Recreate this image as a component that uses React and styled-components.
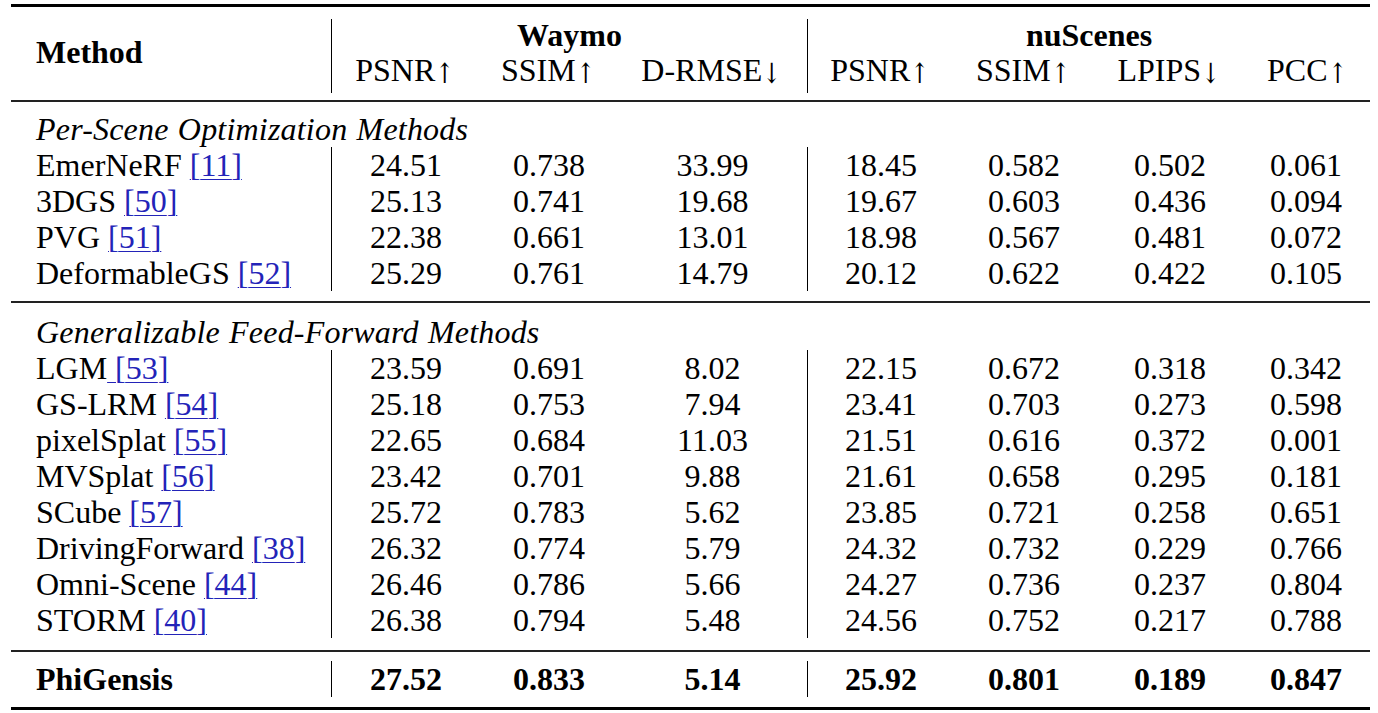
import React from 'react'
import styled, { createGlobalStyle } from 'styled-components'

const GlobalStyle = createGlobalStyle`
  html, body {
    margin: 0;
    padding: 0;
    background: #fff;
  }
`

const Table = styled.table`
  border-collapse: separate;
  border-spacing: 0;
  table-layout: fixed;
  width: 1359px;
  margin: 4px 0 0 11px;
  font-family: 'Liberation Serif', 'Times New Roman', serif;
  font-size: 32px;
  color: #000;
`

const RuleCell = styled.td`
  height: ${p => (p.$thick ? 3 : 2)}px;
  padding: 0;
  background: ${p => (p.$thick ? '#000' : '#222')};
  font-size: 0;
  line-height: 0;
`

const GapCell = styled.td`
  height: ${p => p.$h}px;
  padding: 0;
  font-size: 0;
  line-height: 0;
`

const HeadCell = styled.th`
  box-sizing: border-box;
  height: ${p => (p.$span ? 72 : 36)}px;
  padding: 0 0 ${p => p.$pb || 0}px ${p => (p.$left ? 25 : 0)}px;
  line-height: 30px;
  vertical-align: middle;
  text-align: ${p => (p.$left ? 'left' : 'center')};
  font-weight: ${p => (p.$bold ? 700 : 400)};
  white-space: nowrap;
  border-right: ${p => (p.$divider ? '1px solid #000' : 'none')};
`

const Arrow = styled.span`
  font-family: 'DejaVu Serif', serif;
  font-size: 28px;
  display: inline-block;
  transform: scaleX(0.8) translateY(2px);
  margin-left: -2px;
`

const Section = styled.td`
  height: 36px;
  padding: 0 0 0 25px;
  line-height: 36px;
  font-style: italic;
  white-space: nowrap;
  word-spacing: 1px;
  letter-spacing: 0.2px;
`

const NameCell = styled.td`
  height: 36px;
  padding: 0 0 0 25px;
  line-height: 36px;
  white-space: nowrap;
  border-right: 1px solid #000;
  font-weight: ${p => (p.$bold ? 700 : 400)};
`

const ValueCell = styled.td`
  height: 36px;
  padding: 0 ${p => (p.$last ? 4 : 0)}px 0 0;
  line-height: 36px;
  text-align: center;
  white-space: nowrap;
  font-weight: ${p => (p.$bold ? 700 : 400)};
  border-right: ${p => (p.$divider ? '1px solid #000' : 'none')};
`

const Ref = styled.span`
  color: #2323b8;
  text-decoration: underline;
  text-decoration-thickness: 1px;
  text-underline-offset: 3px;
  white-space: pre;
`

const widths = [321, 148, 138, 190, 146, 140, 152, 124]

const perScene = [
  ['EmerNeRF', '11', ['24.51', '0.738', '33.99', '18.45', '0.582', '0.502', '0.061']],
  ['3DGS', '50', ['25.13', '0.741', '19.68', '19.67', '0.603', '0.436', '0.094']],
  ['PVG', '51', ['22.38', '0.661', '13.01', '18.98', '0.567', '0.481', '0.072']],
  ['DeformableGS', '52', ['25.29', '0.761', '14.79', '20.12', '0.622', '0.422', '0.105']]
]

const feedForward = [
  ['LGM', '53', ['23.59', '0.691', '8.02', '22.15', '0.672', '0.318', '0.342'], true],
  ['GS-LRM', '54', ['25.18', '0.753', '7.94', '23.41', '0.703', '0.273', '0.598']],
  ['pixelSplat', '55', ['22.65', '0.684', '11.03', '21.51', '0.616', '0.372', '0.001']],
  ['MVSplat', '56', ['23.42', '0.701', '9.88', '21.61', '0.658', '0.295', '0.181']],
  ['SCube', '57', ['25.72', '0.783', '5.62', '23.85', '0.721', '0.258', '0.651']],
  ['DrivingForward', '38', ['26.32', '0.774', '5.79', '24.32', '0.732', '0.229', '0.766']],
  ['Omni-Scene', '44', ['26.46', '0.786', '5.66', '24.27', '0.736', '0.237', '0.804']],
  ['STORM', '40', ['26.38', '0.794', '5.48', '24.56', '0.752', '0.217', '0.788']]
]

const ours = ['27.52', '0.833', '5.14', '25.92', '0.801', '0.189', '0.847']

const metrics = [
  ['PSNR', '↑'], ['SSIM', '↑'], ['D-RMSE', '↓'],
  ['PSNR', '↑'], ['SSIM', '↑'], ['LPIPS', '↓'], ['PCC', '↑']
]

function Rule ({ thick }) {
  return (
    <tr>
      <RuleCell colSpan={8} $thick={thick} />
    </tr>
  )
}

function Gap ({ h }) {
  return (
    <tr>
      <GapCell colSpan={8} $h={h} />
    </tr>
  )
}

function Values ({ values, bold }) {
  return values.map((v, i) => (
    <ValueCell key={i} $bold={bold} $divider={i === 2} $last={i === 6}>
      {v}
    </ValueCell>
  ))
}

function MethodRow ({ name, cite, values, padRef }) {
  return (
    <tr>
      <NameCell>
        {name}
        {padRef ? <Ref> [{cite}]</Ref> : <> <Ref>[{cite}]</Ref></>}
      </NameCell>
      <Values values={values} />
    </tr>
  )
}

export default function App () {
  return (
    <>
      <GlobalStyle />
      <Table>
        <colgroup>
          {widths.map((w, i) => <col key={i} style={{ width: w }} />)}
        </colgroup>
        <tbody>
          <Rule thick />
          <Gap h={12} />
          <tr>
            <HeadCell rowSpan={2} $span $left $bold $divider $pb={8}>Method</HeadCell>
            <HeadCell colSpan={3} $bold $divider $pb={4}>Waymo</HeadCell>
            <HeadCell colSpan={4} $bold $pb={4}>nuScenes</HeadCell>
          </tr>
          <tr>
            {metrics.map(([label, arrow], i) => (
              <HeadCell key={i} $pb={6} $divider={i === 2}>
                {label}<Arrow>{arrow}</Arrow>
              </HeadCell>
            ))}
          </tr>
          <Gap h={7} />
          <Rule />
          <Gap h={9} />
          <tr>
            <Section colSpan={8}>Per-Scene Optimization Methods</Section>
          </tr>
          {perScene.map(([name, cite, values]) => (
            <MethodRow key={name} name={name} cite={cite} values={values} />
          ))}
          <Gap h={10} />
          <Rule />
          <Gap h={11} />
          <tr>
            <Section colSpan={8}>Generalizable Feed-Forward Methods</Section>
          </tr>
          {feedForward.map(([name, cite, values, padRef]) => (
            <MethodRow key={name} name={name} cite={cite} values={values} padRef={padRef} />
          ))}
          <Gap h={12} />
          <Rule />
          <Gap h={9} />
          <tr>
            <NameCell $bold>PhiGensis</NameCell>
            <Values values={ours} bold />
          </tr>
          <Gap h={10} />
          <Rule thick />
        </tbody>
      </Table>
    </>
  )
}
